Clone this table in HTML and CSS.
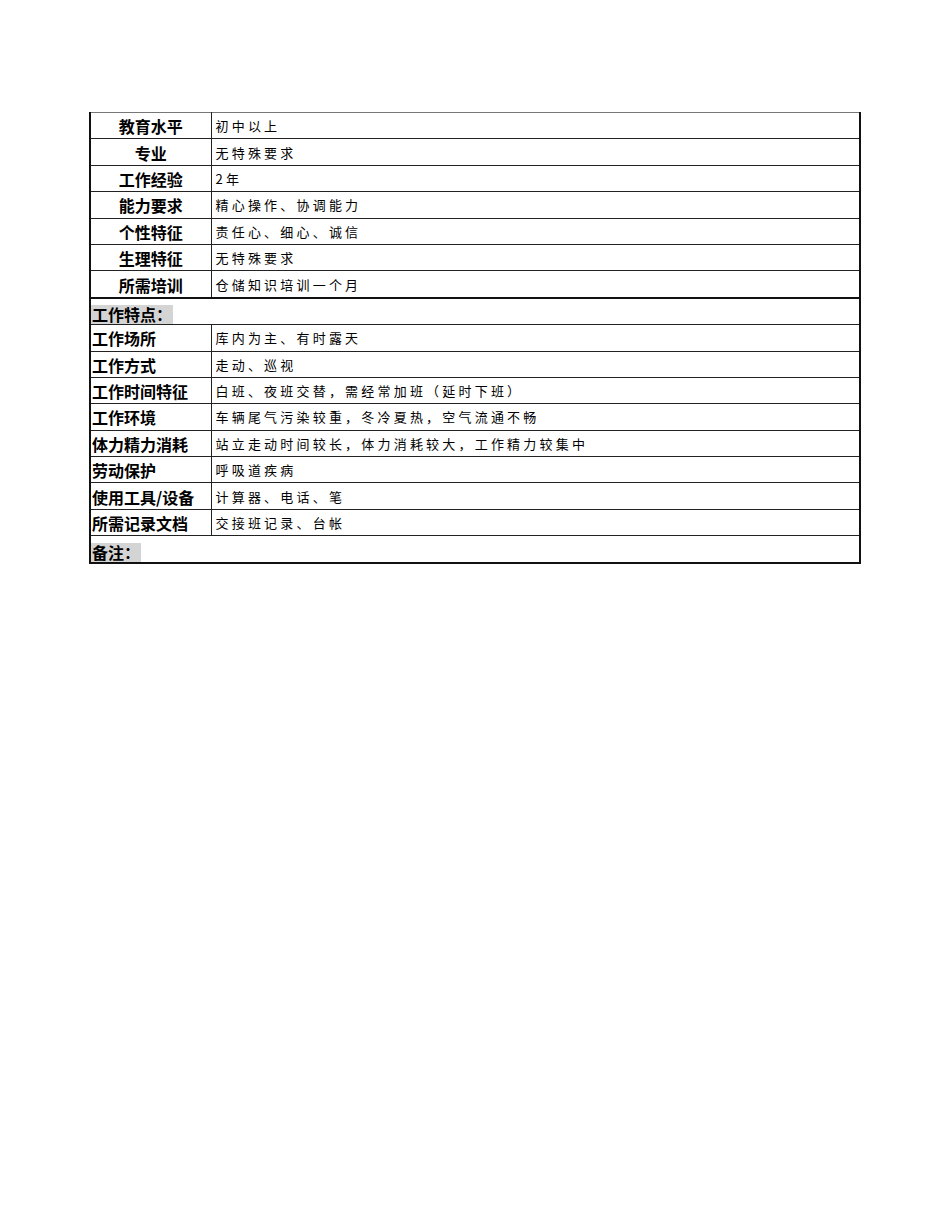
FILE: index.html
```html
<!DOCTYPE html>
<html lang="zh">
<head>
<meta charset="utf-8">
<link rel="stylesheet" href="styles.css">
</head>
<body>
<div class="page">
<table class="sheet">
<colgroup><col class="c1"><col class="c2"></colgroup>
<tbody>
<tr><td class="lab center">教育水平</td><td class="val">初中以上</td></tr>
<tr><td class="lab center">专业</td><td class="val">无特殊要求</td></tr>
<tr><td class="lab center">工作经验</td><td class="val">2年</td></tr>
<tr><td class="lab center">能力要求</td><td class="val">精心操作、协调能力</td></tr>
<tr><td class="lab center">个性特征</td><td class="val">责任心、细心、诚信</td></tr>
<tr><td class="lab center">生理特征</td><td class="val">无特殊要求</td></tr>
<tr class="thick"><td class="lab center">所需培训</td><td class="val">仓储知识培训一个月</td></tr>
<tr><td class="head" colspan="2"><span class="hl">工作特点：</span></td></tr>
<tr><td class="lab">工作场所</td><td class="val">库内为主、有时露天</td></tr>
<tr><td class="lab">工作方式</td><td class="val">走动、巡视</td></tr>
<tr><td class="lab">工作时间特征</td><td class="val">白班、夜班交替，需经常加班（延时下班）</td></tr>
<tr><td class="lab">工作环境</td><td class="val">车辆尾气污染较重，冬冷夏热，空气流通不畅</td></tr>
<tr><td class="lab">体力精力消耗</td><td class="val">站立走动时间较长，体力消耗较大，工作精力较集中</td></tr>
<tr><td class="lab">劳动保护</td><td class="val">呼吸道疾病</td></tr>
<tr><td class="lab">使用工具/设备</td><td class="val">计算器、电话、笔</td></tr>
<tr><td class="lab">所需记录文档</td><td class="val">交接班记录、台帐</td></tr>
<tr class="last"><td class="head" colspan="2"><span class="hl">备注：</span></td></tr>
</tbody>
</table>
</div>
</body>
</html>
```

FILE: styles.css
```css
html, body {
  margin: 0;
  padding: 0;
  background: #ffffff;
}
.page {
  padding: 112px 0 0 89px;
}
.sheet {
  border-collapse: collapse;
  table-layout: fixed;
  width: 772px;
  border-top: 1px solid #777;
  border-left: 2px solid #111;
  border-right: 2px solid #111;
  border-bottom: 2px solid #111;
}
.c1 { width: 121px; }
.c2 { width: 649px; }
.sheet td {
  height: 25.4px;
  padding: 0;
  border-bottom: 1px solid #222;
  vertical-align: middle;
  white-space: nowrap;
  overflow: hidden;
  color: #000;
}
.sheet tr.thick td {
  border-bottom: 2px solid #111;
}
.sheet tr.last td {
  border-bottom: 2px solid #111;
}
.sheet td.lab {
  border-right: 1px solid #222;
  font-family: "Noto Sans CJK SC", "Liberation Sans", sans-serif;
  font-weight: 700;
  font-size: 16px;
  height: 23.4px;
  padding: 2px 0 0 1px;
  line-height: 23px;
}
.sheet td.lab.center {
  text-align: center;
  padding-left: 0;
}
.sheet td.val {
  font-family: "Noto Sans CJK SC", "Liberation Serif", serif;
  font-weight: 400;
  font-size: 13px;
  letter-spacing: 3.2px;
  padding-left: 4px;
  line-height: 25px;
}
.sheet td.head {
  font-family: "Noto Sans CJK SC", "Liberation Sans", sans-serif;
  font-weight: 700;
  font-size: 16px;
  line-height: 25px;
  padding-left: 0;
  vertical-align: bottom;
}
.hl {
  display: inline-block;
  background: #d4d4d4;
  padding: 0 1px 0 1px;
  height: 19px;
  line-height: 19px;
  vertical-align: bottom;
}
```
